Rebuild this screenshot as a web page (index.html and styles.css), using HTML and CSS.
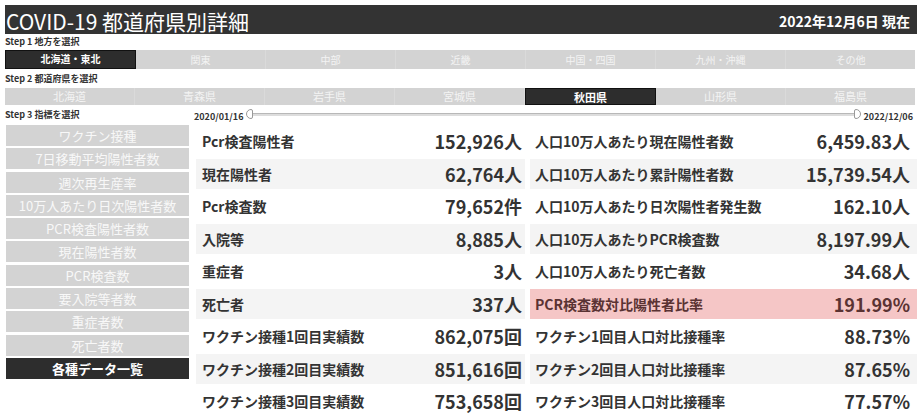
FILE: index.html
```html
<!doctype html>
<html lang="ja">
<head>
    <meta charset="UTF-8">
    <meta name="viewport" content="width=device-width, initial-scale=1.0">
    <title>COVID-19 都道府県別詳細</title>
    <link rel="stylesheet" href="styles.css">
</head>
<body>
    <div class="page">
        <header class="title-bar">
            <h1>COVID-19 都道府県別詳細</h1>
            <span class="as-of">2022年12月6日 現在</span>
        </header>

        <div class="step-label step-1">Step 1 地方を選択</div>
        <nav class="tabs regions">
            <span class="tab active">北海道・東北</span>
            <span class="tab">関東</span>
            <span class="tab">中部</span>
            <span class="tab">近畿</span>
            <span class="tab">中国・四国</span>
            <span class="tab">九州・沖縄</span>
            <span class="tab">その他</span>
        </nav>

        <div class="step-label step-2">Step 2 都道府県を選択</div>
        <nav class="tabs prefs">
            <span class="tab">北海道</span>
            <span class="tab">青森県</span>
            <span class="tab">岩手県</span>
            <span class="tab">宮城県</span>
            <span class="tab active">秋田県</span>
            <span class="tab">山形県</span>
            <span class="tab">福島県</span>
        </nav>

        <div class="main">
            <aside class="sidebar">
                <div class="step-label step-3">Step 3 指標を選択</div>
                <ul class="metrics">
                    <li>ワクチン接種</li>
                    <li>7日移動平均陽性者数</li>
                    <li>週次再生産率</li>
                    <li>10万人あたり日次陽性者数</li>
                    <li>PCR検査陽性者数</li>
                    <li>現在陽性者数</li>
                    <li>PCR検査数</li>
                    <li>要入院等者数</li>
                    <li>重症者数</li>
                    <li>死亡者数</li>
                    <li class="active">各種データ一覧</li>
                </ul>
            </aside>

            <section class="content">
                <div class="range">
                    <span class="range-date">2020/01/16</span>
                    <span class="handle handle-start"></span>
                    <span class="track"></span>
                    <span class="handle handle-end"></span>
                    <span class="range-date">2022/12/06</span>
                </div>

                <div class="stats">
                    <div class="stat-col">
                        <div class="stat"><span class="name">Pcr検査陽性者</span><span class="value">152,926人</span></div>
                        <div class="stat"><span class="name">現在陽性者</span><span class="value">62,764人</span></div>
                        <div class="stat"><span class="name">Pcr検査数</span><span class="value">79,652件</span></div>
                        <div class="stat"><span class="name">入院等</span><span class="value">8,885人</span></div>
                        <div class="stat"><span class="name">重症者</span><span class="value">3人</span></div>
                        <div class="stat"><span class="name">死亡者</span><span class="value">337人</span></div>
                        <div class="stat"><span class="name">ワクチン接種1回目実績数</span><span class="value">862,075回</span></div>
                        <div class="stat"><span class="name">ワクチン接種2回目実績数</span><span class="value">851,616回</span></div>
                        <div class="stat"><span class="name">ワクチン接種3回目実績数</span><span class="value">753,658回</span></div>
                    </div>
                    <div class="stat-col wide">
                        <div class="stat"><span class="name">人口10万人あたり現在陽性者数</span><span class="value">6,459.83人</span></div>
                        <div class="stat"><span class="name">人口10万人あたり累計陽性者数</span><span class="value">15,739.54人</span></div>
                        <div class="stat"><span class="name">人口10万人あたり日次陽性者発生数</span><span class="value">162.10人</span></div>
                        <div class="stat"><span class="name">人口10万人あたりPCR検査数</span><span class="value">8,197.99人</span></div>
                        <div class="stat"><span class="name">人口10万人あたり死亡者数</span><span class="value">34.68人</span></div>
                        <div class="stat alert"><span class="name">PCR検査数対比陽性者比率</span><span class="value">191.99%</span></div>
                        <div class="stat"><span class="name">ワクチン1回目人口対比接種率</span><span class="value">88.73%</span></div>
                        <div class="stat"><span class="name">ワクチン2回目人口対比接種率</span><span class="value">87.65%</span></div>
                        <div class="stat"><span class="name">ワクチン3回目人口対比接種率</span><span class="value">77.57%</span></div>
                    </div>
                </div>
            </section>
        </div>
    </div>
</body>
</html>
```

FILE: styles.css
```css
body {
    font-family: "Noto Sans CJK JP", "Noto Sans", sans-serif;
    background-color: #fff;
    color: #333;
    margin: 0;
    padding: 0;
}
.page {
    width: 912px;
    padding: 5px 7px 0 5px;
}
.title-bar {
    display: flex;
    justify-content: space-between;
    align-items: flex-end;
    height: 29px;
    background-color: #333;
    color: #fff;
}
.title-bar h1 {
    margin: 0;
    font-size: 21px;
    font-weight: 400;
    line-height: 26px;
    padding-left: 1px;
    white-space: nowrap;
}
.as-of {
    font-size: 14px;
    font-weight: 700;
    line-height: 20px;
    padding-right: 7px;
    padding-bottom: 3px;
}
.step-label {
    font-size: 9px;
    font-weight: 700;
    color: #333;
    white-space: nowrap;
}
.step-1 {
    height: 16px;
    line-height: 16px;
}
.step-2 {
    height: 19px;
    line-height: 19px;
}
.step-3 {
    height: 20px;
    line-height: 20px;
}
.tabs {
    display: flex;
    width: 910px;
    background-color: #d3d3d3;
}
.tab {
    flex: 1;
    text-align: center;
    color: #f4f4f4;
    font-size: 10px;
    border-right: 1px solid #dadada;
    box-sizing: border-box;
}
.tab:last-child {
    border-right: none;
}
.tab.active {
    background-color: #2d2d2d;
    color: #fff;
    border: 1px solid #111;
    font-weight: 700;
}
.regions .tab {
    height: 19px;
    line-height: 19px;
}
.prefs .tab {
    height: 17px;
    line-height: 17px;
    font-size: 11px;
}
.regions .tab.active, .prefs .tab.active {
    line-height: 16px;
}
.main {
    display: grid;
    grid-template-columns: 186px 721px;
    column-gap: 5px;
}
.metrics {
    list-style: none;
    margin: 0;
    padding: 0;
}
.metrics li {
    height: 21px;
    line-height: 21px;
    margin: 0 2px 2.3px 1px;
    background-color: #d3d3d3;
    color: #f8f8f8;
    font-size: 13px;
    text-align: center;
    white-space: nowrap;
}
.metrics li.active {
    background-color: #2d2d2d;
    color: #fff;
    font-weight: 700;
}
.range {
    display: flex;
    align-items: center;
    height: 20px;
    margin: 0 4px 0 -2px;
}
.range-date {
    font-size: 9px;
    font-weight: 700;
    color: #333;
    padding-top: 3px;
}
.track {
    flex: 1;
    height: 2px;
    background-color: #ddd;
    border-top: 1px solid #b8b8b8;
    margin-top: -2px;
}
.handle {
    width: 5px;
    height: 8px;
    border: 1px solid #999;
    background-color: #fff;
    margin-top: -3px;
}
.handle-start {
    margin-left: 3px;
    border-radius: 5px 2px 2px 5px;
}
.handle-end {
    margin-right: 3px;
    border-radius: 2px 5px 5px 2px;
}
.stats {
    display: grid;
    grid-template-columns: 329px 387px;
    column-gap: 5px;
    margin-top: 1px;
}
.stat-col {
    display: flex;
    flex-direction: column;
    gap: 2.5px;
}
.stat {
    display: flex;
    align-items: center;
    justify-content: space-between;
    height: 30px;
    padding: 0 3px 0 6px;
    white-space: nowrap;
}
.stat:nth-child(even) {
    background-color: #f4f4f4;
}
.stat .name {
    font-size: 14px;
    font-weight: 700;
}
.stat .value {
    font-size: 18px;
    font-weight: 700;
}
.wide .stat {
    padding: 0 7px 0 5px;
}
.stat.alert {
    background-color: #f5c6c6;
    color: #5a3333;
}
```
